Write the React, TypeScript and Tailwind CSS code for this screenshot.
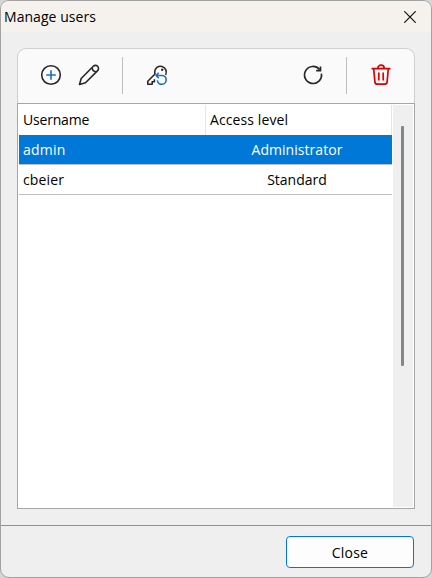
import React from "react";

const font = "font-['Open_Sans','Noto_Sans',sans-serif] text-[14px] leading-5 text-black";

function Plus() {
  return (
    <svg width="22" height="22" viewBox="0 0 22 22" fill="none" strokeWidth="1.6" className="-mt-px ml-[22px]">
      <circle cx="11" cy="11" r="9.3" stroke="#272727" />
      <path d="M11 6.2v9.6M6.2 11h9.6" stroke="#1a6fc4" />
    </svg>
  );
}

function Pencil() {
  return (
    <svg width="22" height="22" viewBox="0 0 22 22" fill="none" stroke="#272727" strokeWidth="1.6" strokeLinejoin="round" className="-mt-px ml-4">
      <path d="M1.5 20.5l1.7-6L15.3 2.3a2.95 2.95 0 0 1 4.3 4.3L7.5 18.8z" />
      <path d="M14.2 3.7c.1 2.3 1.6 3.8 4 4" />
    </svg>
  );
}

function KeyReset() {
  return (
    <svg width="22" height="22" viewBox="0 0 22 22" fill="none" strokeWidth="1.6" strokeLinejoin="round" className="-mt-px ml-[23px]">
      <path d="M19.5 11a5.8 5.8 0 1 0-10.8-2.9q0 .9.3 1.9L1.8 17.2v3.1h4.4v-2.6h2.2v-2.4" stroke="#272727" />
      <circle cx="16.2" cy="5.8" r="1.2" fill="#272727" />
      <path d="M10.4 11.5h5.3a4.4 4.4 0 1 1-4.3 4.9M12.7 8.7l-2.6 2.8 2.6 2.6" stroke="#1a6fc4" />
    </svg>
  );
}

function Refresh() {
  return (
    <svg width="22" height="22" viewBox="0 0 22 22" fill="none" stroke="#272727" strokeWidth="1.7" className="-mt-px ml-auto">
      <path d="M19.4 9.6A8.5 8.5 0 1 1 17.6 5.6" />
      <path d="M18.5 2.4v4.3h-4.3" />
    </svg>
  );
}

function Trash() {
  return (
    <svg width="22" height="22" viewBox="0 0 22 22" fill="none" stroke="#dc0000" strokeWidth="1.7" strokeLinejoin="round" className="-mt-px ml-[23px] mr-[22px]">
      <path d="M1.5 4.6h19M7.8 4.4a3.2 3.2 0 0 1 6.4 0M3.7 5l1.2 12.8a2.7 2.7 0 0 0 2.7 2.4h6.8a2.7 2.7 0 0 0 2.7-2.4L18.3 5M8.8 8.6v8M13.2 8.6v8" />
    </svg>
  );
}

export default function App() {
  return (
    <div className={`h-[578px] w-[432px] bg-[#d6d6d6] ${font}`}>
      <div className="flex h-[578px] w-[432px] flex-col overflow-hidden rounded-[9px] border border-[#a2a2a2] bg-[#efefef]">
        <header className="flex h-[31px] shrink-0 items-center justify-between bg-[#f5f2ed] pl-[3px] pr-[15px]">
          <span className="whitespace-nowrap tracking-[0.05px]">Manage users</span>
          <svg width="12" height="12" viewBox="0 0 12 12" stroke="#111" strokeWidth="1.2">
            <path d="M.3.3l11.4 11.4M11.7.3L.3 11.7" />
          </svg>
        </header>

        <main className="mx-4 mt-4 flex h-[461px] shrink-0 flex-col">
          <div className="flex h-[55px] shrink-0 items-center rounded-t-[9px] border border-b-0 border-[#cfcfcf] bg-[#fafafa] pb-px">
            <Plus />
            <Pencil />
            <span className="ml-[22px] h-[37px] w-px bg-[#bebebe]" />
            <KeyReset />
            <Refresh />
            <span className="ml-[22px] h-[37px] w-px bg-[#bebebe]" />
            <Trash />
          </div>
          <div className="flex flex-1 border border-[#a5a6aa] bg-white p-px">
            <div className="w-[373px]">
              <div className="flex h-[30px] items-center">
                <div className="flex h-full w-[187px] items-center border-r border-[#e5e5e5] pl-1">
                  <span className="tracking-[-0.2px]">Username</span>
                </div>
                <div className="flex h-full w-[186px] items-center border-r border-[#e5e5e5] pl-1">
                  <span className="tracking-[0.1px]">Access level</span>
                </div>
              </div>
              <div className="flex h-[30px] items-center border-b border-[#c0c0c0] bg-[#0078d7] text-white">
                <span className="w-[183px] pl-1 tracking-[0.2px]">admin</span>
                <span className="flex-1 text-center tracking-[0.05px]">Administrator</span>
              </div>
              <div className="flex h-[30px] items-center border-b border-[#c0c0c0]">
                <span className="w-[183px] pl-1 tracking-[0.15px]">cbeier</span>
                <span className="flex-1 text-center">Standard</span>
              </div>
            </div>
            <div className="ml-px h-[402px] w-5 bg-[#efefef] pl-2 pt-[21px]">
              <div className="h-[240px] w-[3px] rounded-[1px] bg-[#868686]" />
            </div>
          </div>
        </main>

        <footer className="mt-4 flex flex-1 justify-end border-t border-[#919191] pr-[17px] pt-[10px]">
          <button className="h-8 w-32 rounded-[4px] border border-[#0078d7] bg-[#fdfdfd] pt-px tracking-[0.2px]">Close</button>
        </footer>
      </div>
    </div>
  );
}
